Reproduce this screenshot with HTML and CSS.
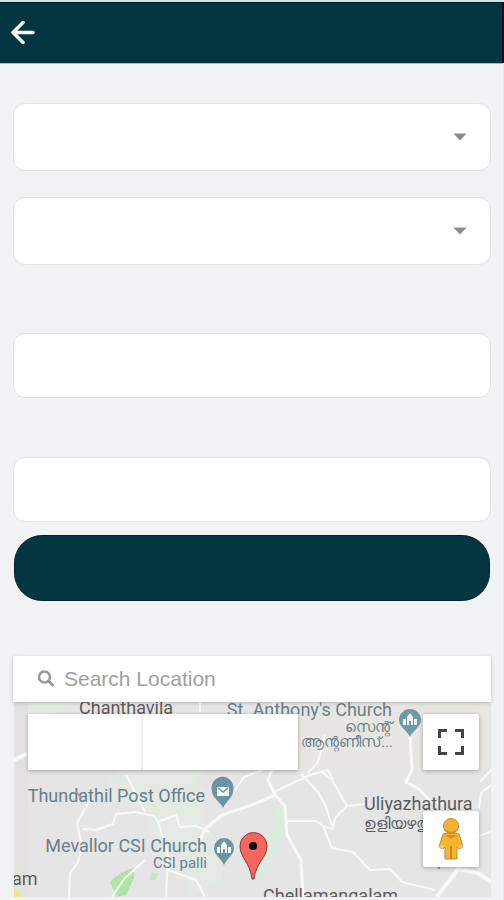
FILE: index.html
```html
<!DOCTYPE html>
<html lang="en">
<head>
<meta charset="utf-8">
<meta name="viewport" content="width=device-width, initial-scale=1">
<title>Location</title>
<link rel="stylesheet" href="styles.css">
</head>
<body>
<header class="topbar">
  <button class="back" type="button" aria-label="Back">
    <svg viewBox="0 0 26 24" width="26" height="24" fill="none" stroke="#fff" stroke-width="3.500" stroke-linecap="round" stroke-linejoin="round"><path d="M23 11.500H3M13 1.500L3 11.500L13 21.500"/></svg>
  </button>
</header>
<main class="page">
  <form class="form">
    <div class="select-wrap">
      <select class="field select" aria-label="Category"><option></option></select>
      <svg class="caret" viewBox="0 0 14 8" width="14" height="8"><path d="M0.500 0.500H13.500L7 7.500Z" fill="#8b8b8d"/></svg>
    </div>
    <div class="select-wrap">
      <select class="field select" aria-label="Type"><option></option></select>
      <svg class="caret" viewBox="0 0 14 8" width="14" height="8"><path d="M0.500 0.500H13.500L7 7.500Z" fill="#8b8b8d"/></svg>
    </div>
    <input class="field input spaced" type="text" aria-label="Name">
    <input class="field input last" type="text" aria-label="Details">
    <button class="submit" type="button" aria-label="Submit"></button>
  </form>
  <section class="location">
    <label class="search">
      <svg viewBox="0 0 18 18" width="18" height="18" fill="none" stroke="#999"><circle cx="7.500" cy="7" r="5.500" stroke-width="2.500"/><path d="M11.500 11L16.500 16" stroke-width="3"/></svg>
      <input class="search-input" type="search" placeholder="Search Location" aria-label="Search Location">
    </label>
    <div class="map">
      <svg class="tiles" viewBox="14 702 477 195" preserveAspectRatio="xMidYMid slice">
        <rect x="14" y="702" width="477" height="195" fill="#e5e5e5"/>
        <path d="M290 770L491 770V702H300Z" fill="#e8e6e2"/>
        <path d="M14 702H28V897H14Z" fill="#e3e2e1"/>
        <path d="M110 777L180 772L205 790L202 820L225 850L222 880L190 897L185 860L150 835L145 805L105 800Z" fill="#e3e9e3"/>
        <path d="M28 702H70L60 714H28ZM115 770H205L190 790H120Z" fill="#e2eae3"/>
        <path d="M268 833L278 806L285 820L282 840L270 858L262 875L252 880Z" fill="#dbeedd"/>
        <path d="M110 882Q120 871 134 868L134 878L126 895L117 897Z" fill="#aee5a5"/>
        <path d="M151 872L158 873L156 880H150Z" fill="#c4e6c2"/>
        <path d="M14 887L23 897H14Z" fill="#f2e391"/>
        <g fill="none" stroke="#f9f9f8" stroke-width="2" stroke-linejoin="round">
          <path d="M14 760L27 754" stroke-width="4"/>
          <path d="M274 702L272 770L268 780L275 795L285 806L287 835L301 860L303 897" stroke-width="3"/>
          <path d="M275 795L252 805L222 815L206 828L200 840" stroke-width="3"/>
          <path d="M285 821H316L323 826L332 848L353 852L370 870L390 869L402 882L435 890" />
          <path d="M323 826L333 829L335 818L347 806L332 780L322 772"/>
          <path d="M301 774L318 792L326 807L332 826"/>
          <path d="M308 773L318 762L325 735M333 780L328 770L310 775L272 793"/>
          <path d="M347 806L366 804"/>
          <path d="M410 734L412 770L406 782L419 789L430 801L445 803" stroke-width="3"/>
          <path d="M491 832L474 837M491 785L481 793L479 808"/>
          <path d="M491 770L480 782"/>
          <path d="M437 897L458 869L478 873L491 882" stroke-width="4"/>
          <path d="M90 800L77 823L82 847L78 862L70 873L69 897"/>
          <path d="M83 829L96 830L113 824L116 814L135 812L154 816L158 822L176 815L180 827L196 826L210 832"/>
          <path d="M158 822L168 855L166 897M112 897L124 879L145 860M145 812L132 786L126 775M168 870L196 880L205 897"/>
          <path d="M200 702L200 712M235 790L244 777L263 770"/>
        </g>
        <g class="place" text-anchor="end">
          <text x="392" y="716" font-size="18">St. Anthony's Church</text>
          <text x="392" y="732" font-size="15">സെന്റ്</text>
          <text x="393" y="747" font-size="15">ആന്റണീസ്...</text>
          <text x="205" y="802" font-size="18">Thundathil Post Office</text>
          <text x="207" y="852" font-size="18">Mevallor CSI Church</text>
          <text x="207" y="868" font-size="15">CSI palli</text>
        </g>
        <g class="town">
          <text x="79" y="714" font-size="18">Chanthavila</text>
          <text x="364" y="810" font-size="18">Uliyazhathura</text>
          <text x="364" y="829" font-size="16">ഉളിയഴത്തുറ</text>
          <text x="263" y="902" font-size="18">Chellamangalam</text>
          <text x="12" y="885" font-size="18">am</text>
        </g>
        <path d="M76 792L82 798" stroke="#bd8b92" stroke-width="2"/>
        <g id="pins">
          <path d="M399 720A11 11 0 1 1 421 720C421 727 413 730 410 737C407 730 399 727 399 720Z" fill="#6e9aa6"/>
          <path d="M403 725V719H406V725ZM407 725V717L410 713L413 717V725H411V721H409V725ZM414 725V719H417V725Z" fill="#f0f7f8"/>
          <path d="M212 791A11 11 0 1 1 233 791C233 798 226 801 223 808C220 801 212 798 212 791Z" fill="#6e929e"/>
          <rect x="217" y="787" width="12" height="9" rx="1" fill="#f0f7f8"/><path d="M218 788L223 792L228 788" fill="none" stroke="#6e929e" stroke-width="1.500"/>
          <path d="M214 848A10 10 0 1 1 234 848C234 855 227 858 224 865C221 858 214 855 214 848Z" fill="#6e929e"/>
          <path d="M217 853V847H220V853ZM221 853V845L224 841L227 845V853H225V849H223V853ZM228 853V847H231V853Z" fill="#f0f7f8"/>
        </g>
        <path d="M240 846A13 13 0 1 1 267 846C267 858 256 862 254 879H252C250 862 240 858 240 846Z" fill="#f5665e" stroke="#94363b"/>
        <circle cx="253" cy="846" r="4" fill="#080000"/>
        <circle cx="439" cy="868" r="1" fill="#4589a0"/>
      </svg>
      <div class="map-type">
        <button type="button" class="map-type-btn" aria-label="Map"></button>
        <button type="button" class="map-type-btn wide" aria-label="Satellite"></button>
      </div>
      <button type="button" class="control fullscreen" aria-label="Full screen">
        <svg viewBox="0 0 26 26" width="26" height="26" fill="none" stroke="#444" stroke-width="3"><path d="M1.500 9V1.500H9M17 1.500H24.500V9M24.500 17V24.500H17M9 24.500H1.500V17"/></svg>
      </button>
      <button type="button" class="control pegman" aria-label="Street view">
        <svg viewBox="0 0 26 44" width="26" height="44"><path d="M5 17Q13 14 21 17L25 30L21 32L19 30V42H7V30L5 32L1 30Z" fill="#f5b52f" stroke="#bd8b37"/><path d="M7 18L13 22L19 18Z" fill="#d98a1c"/><path d="M13 29V42" stroke="#b47d25" stroke-width="1.500"/><path d="M2 28L1 30L5 32L6 28M20 28L21 32L25 30L24 28" fill="#e0c9a0"/><circle cx="13" cy="9" r="7.500" fill="#f6b333" stroke="#c68c25"/><path d="M7 13Q13 18 19 13" fill="none" stroke="#d68b1c" stroke-width="1.500"/></svg>
      </button>
    </div>
  </section>
</main>
</body>
</html>
```
FILE: styles.css
```css
* { box-sizing: border-box; }

body {
  margin: 0;
  background: #f0f2f4;
  font-family: Roboto, "Liberation Sans", sans-serif;
}

button { padding: 0; border: 0; cursor: pointer; }

.topbar {
  display: flex;
  align-items: center;
  height: 63px;
  padding-left: 10px;
  border-top: 2px solid #c7e8ea;
  background: #033640;
  box-shadow: inset 0 1px #02151a, inset -2px 0 #02151a, 0 1px #a9b9bd;
}

.back { display: flex; background: none; }

.page { padding: 40px 12px 3px 13px; border-right: 1px solid #e9e8ef; }

.form { display: flex; flex-direction: column; }

.select-wrap {
  display: flex;
  align-items: center;
  position: relative;
  margin-bottom: 26px;
}

.field {
  width: 100%;
  border: 1px solid #dfe1e2;
  border-radius: 12px;
  background: #fff;
  padding: 0 16px;
  font: 18px Roboto, "Liberation Sans", sans-serif;
}

.select { height: 68px; appearance: none; }

.caret { position: absolute; right: 24px; pointer-events: none; }

.input { height: 65px; }

.spaced { margin: 42px 0 59px; }

.last { margin-bottom: 13px; }

.submit {
  height: 66px;
  margin: 0 1px;
  border: 1px solid #02252d;
  border-radius: 28px;
  background: #033640;
}

.location { margin-top: 55px; }

.search {
  display: flex;
  align-items: center;
  gap: 9px;
  position: relative;
  z-index: 1;
  height: 46px;
  padding: 0 24px;
  background: #fff;
  box-shadow: 0 1px 4px rgba(0, 0, 0, 0.2);
}

.search-input {
  flex: 1;
  min-width: 0;
  padding: 0;
  border: 0;
  outline: 0;
  background: none;
  font: 21px "Liberation Sans", sans-serif;
}

.search-input::placeholder { color: #a0a0a0; }

.map {
  position: relative;
  margin-left: 1px;
  overflow: hidden;
}

.tiles { display: block; width: 100%; min-height: 195px; }

.place { fill: #68808a; }

.town { fill: #5c5c5c; }

.map-type {
  display: flex;
  position: absolute;
  top: 12px;
  left: 14px;
  width: 270px;
  height: 56px;
  box-shadow: 0 1px 4px rgba(0, 0, 0, 0.3);
}

.map-type-btn { flex: 114; background: #fff; }

.map-type-btn.wide { flex: 156; border-left: 2px solid #f0f0f0; }

.control {
  display: flex;
  align-items: center;
  justify-content: center;
  position: absolute;
  right: 12px;
  width: 56px;
  height: 56px;
  background: #fff;
  border-radius: 2px;
  box-shadow: 0 1px 4px rgba(0, 0, 0, 0.3);
}

.fullscreen { top: 12px; }

.pegman { top: 109px; }
```
